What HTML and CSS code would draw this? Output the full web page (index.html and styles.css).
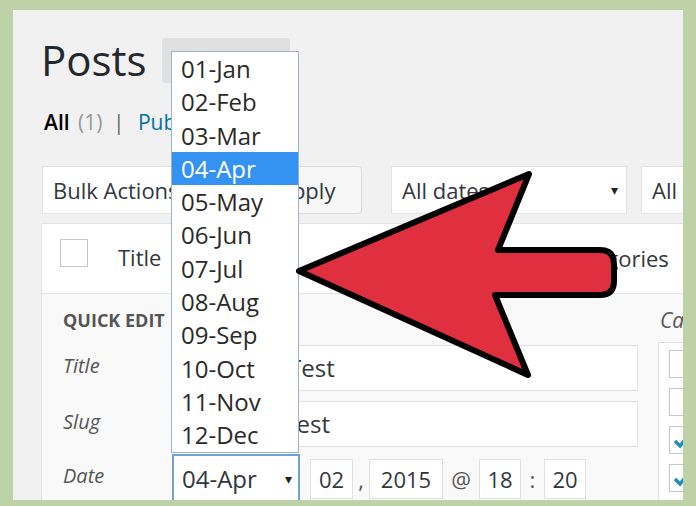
FILE: index.html
```html
<!DOCTYPE html>
<html lang="en">

<head>
    <meta charset="UTF-8">
    <meta name="viewport" content="width=device-width, initial-scale=1.0">
    <title>Posts - Quick Edit</title>
    <link rel="stylesheet" href="styles.css">
</head>

<body>
    <div class="wrap">
        <!-- Cabeçalho -->
        <div class="page-head">
            <h1>Posts</h1>
            <span class="add-new">Add New</span>
        </div>

        <div class="subsubsub">
            <b>All</b> <span class="count">(1)</span> <span class="sep">|</span> <a href="#">Published <span class="count">(1)</span></a>
        </div>

        <!-- Filtros -->
        <div class="tablenav">
            <div class="fake-select bulk">Bulk Actions <span class="caret">&#9662;</span></div>
            <div class="button apply">Apply</div>
            <div class="fake-select dates">All dates <span class="caret">&#9662;</span></div>
            <div class="fake-select cats">All categories</div>
        </div>

        <!-- Tabela -->
        <div class="table">
            <div class="thead">
                <div class="cb"><span class="checkbox"></span></div>
                <div class="col-title">Title</div>
                <div class="col-author"></div>
                <div class="col-cats">Categories</div>
            </div>

            <div class="quick-edit">
                <div class="qe-left">
                    <h4>Quick Edit</h4>
                    <div class="field">
                        <span class="label">Title</span>
                        <div class="input text">Test</div>
                    </div>
                    <div class="field">
                        <span class="label">Slug</span>
                        <div class="input text">test</div>
                    </div>
                    <div class="field date-row">
                        <span class="label">Date</span>
                        <div class="fake-select month">04-Apr <span class="caret">&#9662;</span></div>
                        <div class="input small day">02</div>
                        <span class="sep-char comma">,</span>
                        <div class="input small year">2015</div>
                        <span class="sep-char at">@</span>
                        <div class="input small hour">18</div>
                        <span class="sep-char colon">:</span>
                        <div class="input small hour">20</div>
                    </div>
                </div>

                <div class="qe-right">
                    <span class="label">Categories</span>
                    <div class="cat-box">
                        <span class="checkbox"></span>
                        <span class="checkbox"></span>
                        <span class="checkbox checked">
                            <svg width="20" height="20" viewBox="0 0 20 20"><path d="M3 10 L8 15 L17 4" fill="none" stroke="#1e8cbe" stroke-width="3.5"/></svg>
                        </span>
                        <span class="checkbox checked">
                            <svg width="20" height="20" viewBox="0 0 20 20"><path d="M3 10 L8 15 L17 4" fill="none" stroke="#1e8cbe" stroke-width="3.5"/></svg>
                        </span>
                    </div>
                </div>
            </div>
        </div>
    </div>

    <!-- Lista aberta do mês -->
    <ul class="month-list">
        <li>01-Jan</li>
        <li>02-Feb</li>
        <li>03-Mar</li>
        <li class="selected">04-Apr</li>
        <li>05-May</li>
        <li>06-Jun</li>
        <li>07-Jul</li>
        <li>08-Aug</li>
        <li>09-Sep</li>
        <li>10-Oct</li>
        <li>11-Nov</li>
        <li>12-Dec</li>
    </ul>

    <!-- Seta vermelha -->
    <svg class="arrow" width="696" height="506" viewBox="0 0 696 506">
        <path d="M299 271 L529 174 L498 250 L600 250 Q614 250 614 264 L614 281 Q614 295 600 295 L495 295 L528 375 Z"
            fill="#e0303f" stroke="#000" stroke-width="6" stroke-linejoin="round"/>
    </svg>
</body>

</html>
```

FILE: styles.css
```css
/* Estilo geral */
body {
    margin: 0;
    width: 696px;
    height: 506px;
    overflow: hidden;
    background-color: #bdd2a7;
    font-family: 'Open Sans', 'Liberation Sans', sans-serif;
    color: #32373c;
}

.wrap {
    box-sizing: border-box;
    margin: 10px 0 0 13px;
    width: 670px;
    height: 490px;
    padding-left: 28px;
    background-color: #f1f1f1;
    overflow: hidden;
}

/* Cabeçalho */
.page-head {
    display: flex;
    align-items: center;
    margin-top: 28px;
    height: 45px;
}

h1 {
    margin: -3px 15px 0 0;
    font-size: 42px;
    font-weight: 400;
    line-height: 45px;
    color: #23282d;
}

.add-new {
    width: 128px;
    height: 45px;
    background-color: #e0e0e0;
    border-radius: 4px;
    color: #0073aa;
    font-size: 18px;
    line-height: 45px;
    text-align: center;
}

.subsubsub {
    margin-top: 25px;
    padding-left: 3px;
    height: 28px;
    font-size: 21px;
    line-height: 28px;
    white-space: nowrap;
}

.subsubsub b {
    font-weight: 600;
    color: #000;
    margin-right: 3px;
}

.subsubsub .count {
    color: #999;
}

.subsubsub .sep {
    color: #666;
    margin: 0 8px 0 5px;
}

.subsubsub a {
    color: #0073aa;
    text-decoration: none;
}

/* Filtros */
.tablenav {
    display: flex;
    margin-top: 30px;
    height: 48px;
    white-space: nowrap;
}

.tablenav > div {
    flex-shrink: 0;
}

.fake-select {
    box-sizing: border-box;
    position: relative;
    height: 48px;
    padding-left: 10px;
    background-color: #fff;
    border: 1px solid #e2e2e2;
    font-size: 22px;
    line-height: 46px;
    color: #32373c;
}

.caret {
    position: absolute;
    right: 8px;
    top: 0;
    font-size: 14px;
    color: #222;
}

.bulk {
    margin-left: 1px;
    width: 214px;
}

.button {
    box-sizing: border-box;
    margin-left: 7px;
    width: 99px;
    height: 48px;
    padding-left: 14px;
    border: 1px solid #dadada;
    border-radius: 4px;
    background-color: #f7f7f7;
    font-size: 22px;
    line-height: 46px;
}

.dates {
    margin-left: 29px;
    width: 236px;
}

.cats {
    margin-left: 14px;
    width: 200px;
}

/* Tabela */
.table {
    margin-top: 9px;
    width: 700px;
    border: 1px solid #e3e3e3;
    border-right: none;
}

.thead {
    display: flex;
    align-items: center;
    height: 69px;
    background-color: #fff;
    border-bottom: 1px solid #e3e3e3;
    font-size: 22px;
    white-space: nowrap;
}

.thead > div {
    flex-shrink: 0;
}

.checkbox {
    box-sizing: border-box;
    display: block;
    width: 28px;
    height: 28px;
    border: 1px solid #c3c7cb;
    background-color: #fff;
}

.cb {
    padding-left: 18px;
    margin-top: -11px;
}

.col-title {
    margin-left: 30px;
    margin-top: -4px;
    width: 180px;
}

.col-author {
    width: 262px;
}

.col-cats {
    margin-top: -2px;
}

/* Edição rápida */
.quick-edit {
    display: flex;
    height: 220px;
    padding: 14px 0 0 21px;
    background-color: #f9f9f9;
}

.qe-left {
    width: 575px;
    flex-shrink: 0;
}

.quick-edit h4 {
    margin: 0;
    height: 24px;
    font-size: 18px;
    font-weight: 700;
    line-height: 24px;
    text-transform: uppercase;
    color: #555;
}

.label {
    font-size: 20px;
    font-style: italic;
    color: #555;
}

.field {
    display: flex;
    align-items: center;
    margin-top: 10px;
}

.field:first-of-type {
    margin-top: 13px;
}

.field .label {
    width: 109px;
    margin-top: -6px;
}

.input {
    box-sizing: border-box;
    height: 46px;
    width: 466px;
    padding-left: 12px;
    background-color: #fff;
    border: 1px solid #e0e0e0;
    font-size: 24px;
    line-height: 44px;
}

/* o texto fica alinhado depois da lista aberta */
.input.text {
    padding-left: 115px;
}

.date-row {
    margin-top: 7px;
}

.month {
    width: 128px;
    height: 49px;
    border: 2px solid #6fa3d8;
    font-size: 24px;
    line-height: 45px;
    padding-left: 8px;
}

.month .caret {
    right: 6px;
}

.input.small {
    height: 40px;
    padding: 0;
    text-align: center;
    font-size: 22px;
    line-height: 38px;
}

.day {
    width: 43px;
    margin-left: 10px;
}

.year {
    width: 74px;
}

.input.hour {
    width: 42px;
}

.sep-char {
    font-size: 22px;
    text-align: center;
    color: #555;
}

.comma {
    width: 16px;
}

.at {
    width: 36px;
}

.colon {
    width: 23px;
}

.qe-right {
    margin-left: 20px;
    flex-shrink: 0;
}

.qe-right .label {
    display: block;
    height: 24px;
    line-height: 24px;
    font-size: 21px;
    margin-left: 2px;
}

.cat-box {
    box-sizing: border-box;
    display: flex;
    flex-direction: column;
    gap: 10px;
    margin-top: 10px;
    width: 120px;
    height: 200px;
    padding: 7px 0 0 10px;
    background-color: #fff;
    border: 1px solid #e0e0e0;
}

.checked svg {
    display: block;
    margin: 4px 0 0 2px;
}

/* Lista do select aberto */
.month-list {
    box-sizing: border-box;
    position: absolute;
    left: 171px;
    top: 51px;
    width: 128px;
    height: 402px;
    margin: 0;
    padding: 0;
    list-style: none;
    background-color: #fff;
    border: 1px solid #9fb3c8;
}

.month-list li {
    height: 33.3px;
    padding-left: 9px;
    font-size: 24px;
    line-height: 33.3px;
    color: #2a2a2a;
}

.month-list .selected {
    background-color: #3392f2;
    color: #fff;
}

/* Seta */
.arrow {
    position: absolute;
    left: 0;
    top: 0;
    pointer-events: none;
}
```
